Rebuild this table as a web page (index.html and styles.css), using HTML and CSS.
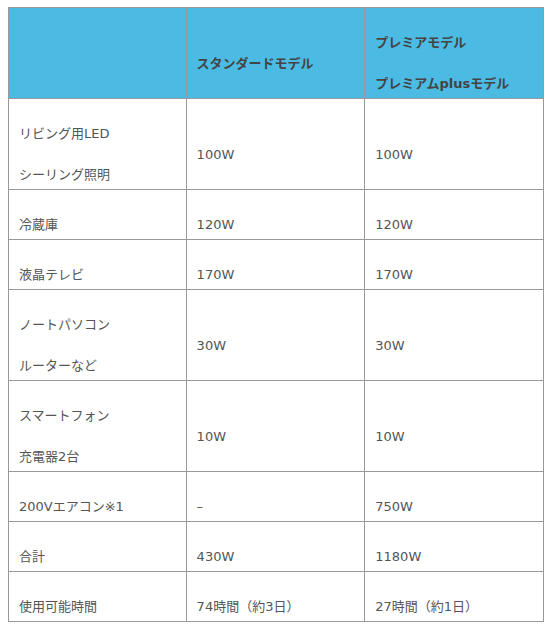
FILE: index.html
```html
<!DOCTYPE html>
<html lang="ja">
<head>
<meta charset="utf-8">
<title>消費電力比較</title>
<link rel="stylesheet" href="styles.css">
</head>
<body>
<table class="spec">
  <colgroup>
    <col class="c1">
    <col class="c2">
    <col class="c3">
  </colgroup>
  <thead>
    <tr>
      <th></th>
      <th><p>スタンダードモデル</p></th>
      <th><p>プレミアモデル</p><p>プレミアムplusモデル</p></th>
    </tr>
  </thead>
  <tbody>
    <tr><td><p>リビング用LED</p><p>シーリング照明</p></td><td><p>100W</p></td><td><p>100W</p></td></tr>
    <tr><td><p>冷蔵庫</p></td><td><p>120W</p></td><td><p>120W</p></td></tr>
    <tr><td><p>液晶テレビ</p></td><td><p>170W</p></td><td><p>170W</p></td></tr>
    <tr><td><p>ノートパソコン</p><p>ルーターなど</p></td><td><p>30W</p></td><td><p>30W</p></td></tr>
    <tr><td><p>スマートフォン</p><p>充電器2台</p></td><td><p>10W</p></td><td><p>10W</p></td></tr>
    <tr><td><p>200Vエアコン※1</p></td><td><p>–</p></td><td><p>750W</p></td></tr>
    <tr><td><p>合計</p></td><td><p>430W</p></td><td><p>1180W</p></td></tr>
    <tr><td><p>使用可能時間</p></td><td><p>74時間（約3日）</p></td><td><p>27時間（約1日）</p></td></tr>
  </tbody>
</table>
</body>
</html>
```
FILE: styles.css
```css
html, body {
  background: #ffffff;
}
body {
  margin: 7px 8px;
  font-family: "DejaVu Sans", "Noto Sans CJK JP", sans-serif;
  font-size: 13px;
  color: #555555;
}
.spec {
  border-collapse: collapse;
  width: 536px;
  table-layout: fixed;
}
.spec .c1 { width: 33.2%; }
.spec .c2 { width: 33.4%; }
.spec .c3 { width: 33.4%; }
.spec th,
.spec td {
  border: 1px solid #999999;
  padding: 4px 10px 4px 10px;
  vertical-align: middle;
  text-align: left;
  line-height: 21px;
}
.spec th {
  background: #4bbbe3;
  color: #444444;
  font-weight: bold;
}
.spec p {
  margin: 20px 0 0 0;
  white-space: nowrap;
}
```
